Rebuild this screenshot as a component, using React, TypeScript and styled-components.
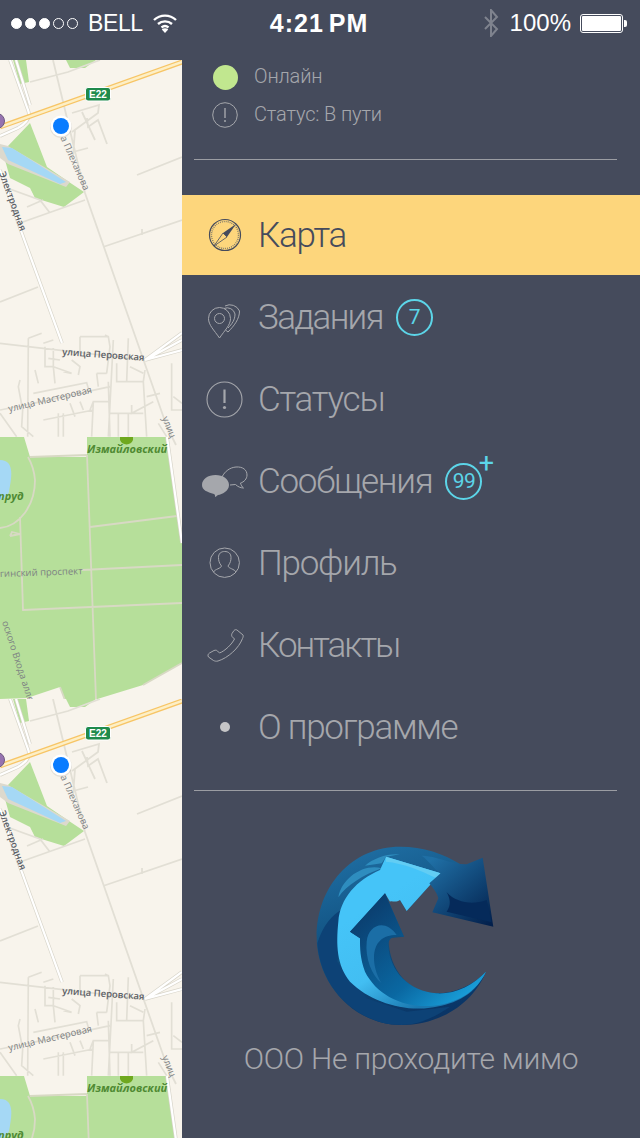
import React from "react";
import styled, { createGlobalStyle } from "styled-components";

const GlobalStyle = createGlobalStyle`
  html, body {
    margin: 0;
    padding: 0;
    background: #454b5c;
  }
`;

const roadLines = `
M53 0 L85 133 L167 367 L176 385
M30 22 L68 12 L100 0
M72 72 L98 53 L99 45 L72 53
M82 52 L95 80 M87 58 L88 67 L98 60 L107 84
M75 70 L73 97 M73 92 L88 88
M137 115 L182 97
M103 187 L182 160 M142 175 L142 169
M20 163 L85 140
M0 242 L38 227
M7 128 L40 140 L50 153 M27 147 L43 140
`;

// neighbourhood around ulitsa Perovskaya, in 3x units
const blockLines = `
M0 40 L130 55 L435 90
M85 25 L125 10 M85 25 L83 320
M130 40 L160 30 M135 50 V110 H160 L165 160 M145 85 L180 90 M160 55 V110 L215 130 M190 125 L215 130
M240 20 H325 L330 50 L320 130 M240 20 V70 M315 15 L325 20 M215 90 L240 110 L235 135
M100 190 L260 158 L265 175 M0 240 L100 220 L330 170
M60 150 L55 170 L68 240 L65 290 L100 320 M105 120 L115 160
M340 30 L325 320 M350 100 V155 H430 L435 120 M385 25 L380 155 M325 155 L330 320 M280 215 L275 320
M290 130 H320 M290 130 L295 170 M175 250 V320 M190 250 V320 M130 270 L280 240
M210 220 L225 260 M240 215 L250 240 M330 250 H430 M355 250 V320 M385 250 V320
M395 225 V250 L460 215 M440 200 L480 190 M430 155 L440 320 M515 100 V240 H546 M520 200 L546 220
M475 280 L500 320 M0 250 L50 320 M390 110 L430 130 M270 240 L280 215 H325
`;

const parkLines = `
M30 397 L87 395 M87 395 L96 640
M90 467 L177 456
M82 510 L182 505
M20 457 L23 550 L182 543
M10 476 L20 474 L12 472 L10 476
M0 468 A38 48 0 0 0 35 420 A38 48 0 0 0 28 397
M60 627 L68 648 M143 625 L182 603
`;

const whiteRoads =
  "M10 0 L28 50 Q32 60 18 68 L0 76 M0 110 L20 168 L62 283 M16 0 L30 45 M145 300 L182 273 M145 300 L182 280 M145 300 L182 290 M167 377 L182 483";

function MapTile() {
  return (
    <MapSvg viewBox="0 0 182 639">
      <rect width="182" height="639" fill="#f8f4ec" />
      <polygon points="0,377 24,377 30,397 87,397 87,377 167,377 182,483 182,603 143,625 68,648 60,627 27,638 0,639" fill="#b6df9a" />
      <polygon points="13,0 26,0 29,22 20,24" fill="#b6df9a" />
      <polygon points="66,0 96,0 85,8 70,8" fill="#b6df9a" />
      <polygon points="30,63 47,107 66,120 84,132 64,147 35,138 30,128 10,118 5,100 8,86" fill="#b6df9a" />
      <path d="M0 84 L8 86 L70 122 L66 127 L8 104 L0 98Z" fill="#dcd9cd" />
      <path d="M2 87 L12 88 L66 122 L60 124 L8 100Z" fill="#a5d8f5" />
      <path d="M0 400 C16 400 11 420 9 432 C6 438 2 440 0 440Z" fill="#a5d8f5" />
      <path d={roadLines} fill="none" stroke="#e2dfd5" strokeWidth="1.800" />
      <g transform="translate(0 270) scale(0.3333)">
        <path d={blockLines} fill="none" stroke="#e2dfd5" strokeWidth="5" />
      </g>
      <path d={parkLines} fill="none" stroke="#d8d9c4" strokeWidth="1.800" />
      <path d={whiteRoads} fill="none" stroke="#d8d5ca" strokeWidth="3.600" />
      <path d={whiteRoads} fill="none" stroke="#ffffff" strokeWidth="2.200" />
      <path d="M0 67 L182 2" fill="none" stroke="#f7c566" strokeWidth="5" />
      <path d="M0 67 L182 2" fill="none" stroke="#fdefc6" strokeWidth="2.400" />
      <path d="M120 377 V380 A7 7 0 0 0 133 380 V377Z" fill="#6fa81e" />
      <circle cx="-3" cy="61" r="7.500" fill="#9673b0" stroke="#6f5a80" />

      <MapLabel transform="translate(84 131) rotate(66)" textAnchor="end">а Плеханова</MapLabel>
      <MapLabel transform="translate(-1 113) rotate(70)" $dark>Электродная</MapLabel>
      <MapLabel transform="translate(62 295) rotate(4)" $dark>улица Перовская</MapLabel>
      <MapLabel transform="translate(9 352) rotate(-13)">улица Мастеровая</MapLabel>
      <MapLabel transform="translate(162 358) rotate(68)">улиц</MapLabel>
      <MapLabel transform="translate(0 517) rotate(-2)">гинский проспект</MapLabel>
      <MapLabel transform="translate(2 562) rotate(72)">оского Входа аллея</MapLabel>
      <ParkLabel x="87" y="393">Измайловский</ParkLabel>
      <ParkLabel x="-2" y="440">пруд</ParkLabel>

      <rect x="85.500" y="27.500" width="25" height="13.500" rx="2.500" fill="#1f8a4c" stroke="#ffffff" />
      <SignText x="98" y="38">E22</SignText>

      <circle cx="61" cy="67" r="11" fill="#000000" opacity="0.08" />
      <circle cx="61" cy="66" r="10.500" fill="#ffffff" />
      <circle cx="61" cy="66" r="8" fill="#0a7cff" />
    </MapSvg>
  );
}

function CompassIcon() {
  return (
    <IconSvg viewBox="0 0 38 38">
      <circle cx="19" cy="19" r="15.500" fill="none" stroke="#454b5c" strokeWidth="1.200" />
      <circle cx="19" cy="19" r="13.500" fill="none" stroke="#6d6c66" strokeWidth="1.400" strokeDasharray="0.8 1.2" />
      <path d="M30 8 L21 21 L17 17Z" fill="#454b5c" />
      <path d="M8 30 L17 17 L21 21Z" fill="none" stroke="#454b5c" strokeWidth="0.800" />
    </IconSvg>
  );
}

function PinsIcon() {
  return (
    <IconSvg viewBox="0 0 38 38">
      <g fill="none" stroke="#a5a7ac" strokeWidth="1">
        <path d="M13.500 40 C8 32 2.500 27 2.500 20.500 A11 11 0 0 1 24.500 20.500 C24.500 27 19 32 13.500 40Z" />
        <circle cx="13.500" cy="20.500" r="5" />
        <path d="M18 10.500 A8 8 0 0 1 29 16 C29 22 26 26 22 30" />
        <path d="M19 8 A10.500 10.500 0 0 1 33.500 13 C33.500 21 28 28 22 34 L19.500 32" />
      </g>
    </IconSvg>
  );
}

function AlertIcon() {
  return (
    <IconSvg viewBox="0 0 38 38">
      <circle cx="18.500" cy="19.500" r="17.500" fill="none" stroke="#a5a7ac" strokeWidth="1.100" />
      <path d="M18.500 9.500 V23" stroke="#a5a7ac" strokeWidth="2.200" />
      <circle cx="18.500" cy="27.500" r="1.600" fill="#a5a7ac" />
    </IconSvg>
  );
}

function ChatIcon() {
  return (
    <IconSvg viewBox="0 0 38 38">
      <path d="M16 15 C19 9 24 5.500 30 5 C37 4.500 41 8 41 13 C41 17 38 20 34.500 21 C35 23 36 25 37.500 26 C34.500 26 31.500 24.500 29.500 22.500 L24 23" fill="none" stroke="#a5a7ac" strokeWidth="1" />
      <path d="M9 35 C9 33 9 32.500 8 32 C1 30 -4 28 -4 23 C-4 17 2 13 9.500 13 C17 13 23 17 23 23 C23 29 16 32.500 12 33 C10.500 34 9.500 35 9 35Z" fill="#a5a7ac" />
    </IconSvg>
  );
}

function ProfileIcon() {
  return (
    <IconSvg viewBox="0 0 38 38">
      <circle cx="18.700" cy="18.700" r="14.700" fill="none" stroke="#a5a7ac" strokeWidth="1" />
      <path d="M7.500 28 C9 25 15 24.500 15.500 22 C13 19 12.500 16 12.500 13.500 C12.500 9.500 15 7.500 18.700 7.500 C22.500 7.500 25 9.500 25 13.500 C25 16 24.500 19 22 22 C22.500 24.500 28.500 25 30 28" fill="none" stroke="#a5a7ac" strokeWidth="1" />
    </IconSvg>
  );
}

function PhoneIcon() {
  return (
    <IconSvg viewBox="0 0 38 38">
      <path d="M31 4 L37 9 C37.500 10 37 11.500 36.500 12.500 C33 22 22 32 12 35 C10 35.500 8.500 35 7.500 34.500 L2.500 31 C1.500 29.500 2 28 3.500 27 L8 24.500 C9.500 24 10.500 24 11.500 25 L13.500 27 C19 25 26 18 28.500 13 L26 10.500 C25.500 9.500 25.500 8.500 26 7.500 L28 4.500 C29 3.500 30 3.500 31 4Z" fill="none" stroke="#a5a7ac" strokeWidth="1" />
    </IconSvg>
  );
}

function WaveLogo() {
  return (
    <LogoSvg viewBox="0 0 630 600">
      <defs>
        <linearGradient id="bodyFill" x1="0.2" y1="0" x2="0.5" y2="1">
          <stop offset="0" stopColor="#1f6fa4" />
          <stop offset="0.5" stopColor="#11507f" />
          <stop offset="1" stopColor="#0a3566" />
        </linearGradient>
        <linearGradient id="brightFill" x1="150" y1="250" x2="330" y2="530" gradientUnits="userSpaceOnUse">
          <stop offset="0" stopColor="#45c4f8" />
          <stop offset="0.55" stopColor="#42bef2" />
          <stop offset="1" stopColor="#1a78b0" />
        </linearGradient>
        <linearGradient id="waveFill" x1="230" y1="200" x2="500" y2="510" gradientUnits="userSpaceOnUse">
          <stop offset="0" stopColor="#0b3f70" />
          <stop offset="0.6" stopColor="#0a68a2" />
          <stop offset="1" stopColor="#1ba5e0" />
        </linearGradient>
        <linearGradient id="headFill" x1="400" y1="70" x2="570" y2="270" gradientUnits="userSpaceOnUse">
          <stop offset="0" stopColor="#1f6fa5" />
          <stop offset="1" stopColor="#03204c" />
        </linearGradient>
      </defs>
      <path d="M300 35 C155 35 50 155 50 305 C50 450 165 570 305 570 C420 570 520 505 558 410 C520 450 465 475 410 475 C330 475 268 410 265 310 L312 305 L255 175 L300 195 L320 228 L422 115 L485 90 C430 55 370 35 300 35Z" fill="url(#bodyFill)" />
      <path d="M52 325 C70 270 95 240 125 225 L112 380 L200 490 L320 530 L450 515 C400 550 350 570 305 570 C165 570 60 450 52 325Z" fill="#0d4276" />
      <path d="M115 187 C125 130 190 85 245 100 C190 120 140 150 115 187Z" fill="#2e8dbf" />
      <path d="M195 92 C220 70 260 55 300 58 L258 65 L245 85Z" fill="#2e8dbf" />
      <path d="M258 65 L422 115 L320 228 L300 195 C285 205 275 195 270 200 L255 175 L150 290 L180 310 C185 380 215 450 290 490 C350 520 450 520 558 410 C520 490 450 510 390 518 C310 530 210 500 150 440 C110 390 108 330 115 260 C120 190 170 135 240 105Z" fill="url(#brightFill)" />
      <path d="M258 65 L422 115 L410 130 C360 105 310 85 258 80Z" fill="#62cdf4" />
      <path d="M255 175 L312 305 C280 300 265 310 265 330 C268 410 330 470 410 475 C465 478 520 450 558 410 C530 470 470 505 400 512 C310 520 230 480 195 410 C180 370 180 340 180 310 L150 290Z" fill="url(#waveFill)" />
      <path d="M200 320 C205 270 255 250 290 300 C250 300 222 320 222 370 C222 400 235 430 245 445 C215 420 195 370 200 320Z" fill="#1b6ea6" />
      <path d="M365 62 C400 60 460 90 500 88 L548 68 L580 275 L397 232 L415 190 C410 170 395 155 388 145 L422 115 C400 100 385 75 365 62Z" fill="url(#headFill)" />
      <path d="M440 172 C470 205 520 210 560 195 L575 262 L440 230 C455 210 450 190 440 172Z" fill="#052a5a" />
    </LogoSvg>
  );
}

function App() {
  return (
    <Screen>
      <GlobalStyle />
      <StatusBar>
        <StatusLeft>
          <SignalDots>
            <SignalDot $on />
            <SignalDot $on />
            <SignalDot $on />
            <SignalDot />
            <SignalDot />
          </SignalDots>
          <Carrier>BELL</Carrier>
          <svg width="26" height="20" viewBox="0 0 26 20">
            <path d="M2 7 A16 16 0 0 1 24 7 M6 11 A10.500 10.500 0 0 1 20 11 M9.500 14.500 A5.500 5.500 0 0 1 16.500 14.500" fill="none" stroke="#ffffff" strokeWidth="2.400" />
            <path d="M13 20 L9.800 16.500 A4.600 4.600 0 0 1 16.200 16.500Z" fill="#ffffff" />
          </svg>
        </StatusLeft>
        <Clock>4:21 PM</Clock>
        <StatusRight>
          <svg width="16" height="28" viewBox="0 0 16 28">
            <path d="M2 8 L14 20 L8 27 V1 L14 8 L2 20" fill="none" stroke="#7f838e" strokeWidth="2" />
          </svg>
          <Percent>100%</Percent>
          <Battery>
            <BatteryLevel />
          </Battery>
        </StatusRight>
      </StatusBar>
      <Body>
        <MapColumn>
          <MapTile />
          <MapTile />
        </MapColumn>
        <Drawer>
          <Presence>
            <PresenceRow>
              <OnlineDot />
              <PresenceText>Онлайн</PresenceText>
            </PresenceRow>
            <PresenceRow>
              <svg width="26" height="26" viewBox="0 0 26 26">
                <circle cx="13" cy="13" r="12.300" fill="none" stroke="#a5a7ac" strokeWidth="1" />
                <path d="M13 6 V16" stroke="#a5a7ac" strokeWidth="1.400" />
                <circle cx="13" cy="19" r="1" fill="#a5a7ac" />
              </svg>
              <PresenceText>Статус: В пути</PresenceText>
            </PresenceRow>
          </Presence>
          <Divider />
          <Menu>
            <ActiveItem>
              <IconSlot>
                <CompassIcon />
              </IconSlot>
              <ItemLabel $active>Карта</ItemLabel>
            </ActiveItem>
            <MenuItem>
              <IconSlot>
                <PinsIcon />
              </IconSlot>
              <ItemLabel $track={-1.7}>Задания</ItemLabel>
              <Badge>7</Badge>
            </MenuItem>
            <MenuItem>
              <IconSlot>
                <AlertIcon />
              </IconSlot>
              <ItemLabel>Статусы</ItemLabel>
            </MenuItem>
            <MenuItem>
              <IconSlot>
                <ChatIcon />
              </IconSlot>
              <ItemLabel>Сообщения</ItemLabel>
              <Badge>
                99
                <BadgePlus>+</BadgePlus>
              </Badge>
            </MenuItem>
            <MenuItem>
              <IconSlot>
                <ProfileIcon />
              </IconSlot>
              <ItemLabel>Профиль</ItemLabel>
            </MenuItem>
            <MenuItem>
              <IconSlot>
                <PhoneIcon />
              </IconSlot>
              <ItemLabel $track={-2}>Контакты</ItemLabel>
            </MenuItem>
            <MenuItem>
              <IconSlot>
                <Bullet />
              </IconSlot>
              <ItemLabel>О программе</ItemLabel>
            </MenuItem>
          </Menu>
          <LowerDivider />
          <Company>
            <WaveLogo />
            <CompanyName>ООО Не проходите мимо</CompanyName>
          </Company>
        </Drawer>
      </Body>
    </Screen>
  );
}

const Screen = styled.div`
  width: 640px;
  height: 1138px;
  overflow: hidden;
  background: #454b5c;
  display: flex;
  flex-direction: column;
  font-family: "Liberation Sans", Arial, sans-serif;
`;

const StatusBar = styled.div`
  height: 60px;
  flex: none;
  display: grid;
  grid-template-columns: 1fr auto 1fr;
  align-items: start;
  padding: 9px 13px 0 11px;
  box-sizing: border-box;
  color: #fff;
`;

const StatusLeft = styled.div`
  display: flex;
  align-items: center;
  height: 28px;
`;

const StatusRight = styled(StatusLeft)`
  justify-content: flex-end;
`;

const SignalDots = styled.div`
  display: flex;
  gap: 3px;
  margin-right: 10px;
`;

const SignalDot = styled.span<{ $on?: boolean }>`
  width: 11px;
  height: 11px;
  box-sizing: border-box;
  border-radius: 50%;
  border: 1px solid #fff;
  background: ${(p) => (p.$on ? "#fff" : "transparent")};
`;

const Carrier = styled.span`
  font-size: 23px;
  letter-spacing: -0.400px;
  line-height: 28px;
  margin-right: 9px;
`;

const Percent = styled.span`
  font-size: 24px;
  line-height: 28px;
  margin: 0 9px 0 11px;
`;

const Clock = styled.span`
  font-size: 25px;
  font-weight: 700;
  line-height: 28px;
  letter-spacing: 1px;
  word-spacing: -3px;
`;

const Battery = styled.div`
  width: 43px;
  height: 19px;
  margin-right: 4px;
  box-sizing: border-box;
  border: 1px solid #fff;
  border-radius: 3px;
  padding: 1px;
  position: relative;

  &::after {
    content: "";
    position: absolute;
    right: -5px;
    top: 5px;
    width: 3px;
    height: 7px;
    background: #fff;
    border-radius: 0 2px 2px 0;
  }
`;

const BatteryLevel = styled.div`
  height: 100%;
  background: #fff;
  border-radius: 1px;
`;

const Body = styled.div`
  flex: 1;
  min-height: 0;
  display: flex;
`;

const MapColumn = styled.div`
  width: 182px;
  flex: none;
  overflow: hidden;
`;

const MapSvg = styled.svg`
  display: block;
  width: 182px;
  height: 639px;
`;

const MapLabel = styled.text<{ $dark?: boolean }>`
  font-family: "Open Sans", sans-serif;
  font-size: 9.500px;
  font-weight: ${(p) => (p.$dark ? 600 : 400)};
  fill: ${(p) => (p.$dark ? "#5c5f66" : "#7c7f82")};
`;

const ParkLabel = styled.text`
  font-family: "Open Sans", sans-serif;
  font-size: 11px;
  font-style: italic;
  font-weight: 700;
  fill: #4f8a33;
`;

const SignText = styled.text`
  font-family: "Liberation Sans", sans-serif;
  font-size: 10px;
  font-weight: 700;
  fill: #ffffff;
  text-anchor: middle;
`;

const Drawer = styled.div`
  flex: 1;
  display: flex;
  flex-direction: column;
`;

const Presence = styled.div`
  display: flex;
  flex-direction: column;
  gap: 12px;
  padding: 4px 0 0 30px;
`;

const PresenceRow = styled.div`
  display: flex;
  align-items: center;
  gap: 16px;
  height: 26px;
`;

const OnlineDot = styled.span`
  width: 25px;
  height: 25px;
  margin-left: 1px;
  border-radius: 50%;
  background: #c1e78f;
`;

const PresenceText = styled.span`
  font-family: Roboto, sans-serif;
  font-weight: 300;
  font-size: 20px;
  letter-spacing: -0.150px;
  padding-bottom: 2px;
  color: #a5a7ac;
`;

const Divider = styled.div`
  height: 1px;
  margin: 31px 23px 35px 12px;
  background: #9b9da3;
`;

const LowerDivider = styled(Divider)`
  margin: 22px 23px 0 12px;
`;

const Menu = styled.div`
  display: flex;
  flex-direction: column;
`;

const MenuItem = styled.div`
  height: 82px;
  flex: none;
  display: flex;
  align-items: center;
  padding-left: 24px;
`;

const ActiveItem = styled(MenuItem)`
  height: 80px;
  margin-bottom: 1px;
  background: #fdd67c;
`;

const IconSlot = styled.div`
  width: 38px;
  height: 38px;
  flex: none;
  display: flex;
  align-items: center;
  justify-content: center;
  margin-right: 14px;
`;

const IconSvg = styled.svg`
  width: 38px;
  height: 38px;
  overflow: visible;
`;

const Bullet = styled.span`
  width: 10px;
  height: 10px;
  border-radius: 50%;
  background: #c5c5c7;
`;

const ItemLabel = styled.span<{ $active?: boolean; $track?: number }>`
  font-family: Roboto, sans-serif;
  font-weight: 300;
  font-size: 35px;
  letter-spacing: ${(p) => p.$track ?? -1.25}px;
  color: ${(p) => (p.$active ? "#454b5c" : "#a5a7ac")};
`;

const Badge = styled.span`
  position: relative;
  width: 37px;
  height: 37px;
  margin-left: 13px;
  box-sizing: border-box;
  border: 2.500px solid #5cd5e8;
  border-radius: 50%;
  display: flex;
  align-items: center;
  justify-content: center;
  color: #5cd5e8;
  font-family: Roboto, sans-serif;
  font-weight: 400;
  font-size: 21px;
  letter-spacing: -0.500px;
`;

const BadgePlus = styled.span`
  position: absolute;
  right: -13px;
  top: -15px;
  font-size: 27px;
  line-height: 27px;
  font-weight: 400;
`;

const Company = styled.div`
  display: flex;
  flex-direction: column;
  align-items: center;
  padding-top: 44px;
`;

const LogoSvg = styled.svg`
  width: 210px;
  height: 200px;
  margin-right: 13px;
`;

const CompanyName = styled.div`
  font-family: Roboto, sans-serif;
  font-weight: 300;
  font-size: 30px;
  letter-spacing: -0.250px;
  line-height: 34px;
  margin-top: 7px;
  color: #a5a7ac;
`;

export default App;
